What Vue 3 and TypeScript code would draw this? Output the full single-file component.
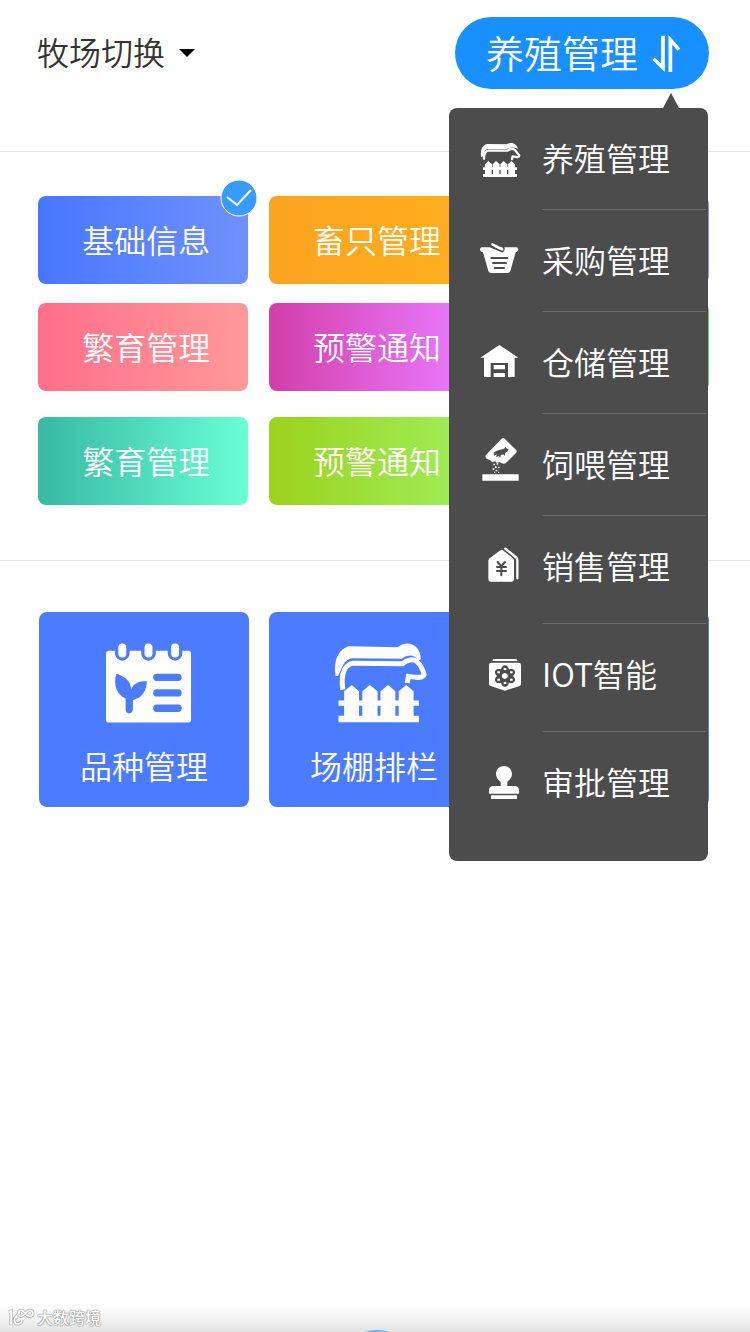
<script setup lang="ts">
import { ref } from 'vue'

type Kind = 'solid' | 'cut' | 'line' | 'cutline' | 'thin'
interface Shape { d: string; kind: Kind }
interface MenuItem { label: string; viewBox: string; shapes: Shape[]; tall?: boolean }
interface Tile { label: string; tone: string }

const current = ref('养殖管理')
const selected = ref(0)

const tiles: Tile[] = [
  { label: '基础信息', tone: 'blue' },
  { label: '畜只管理', tone: 'orange' },
  { label: '', tone: 'violet' },
  { label: '繁育管理', tone: 'pink' },
  { label: '预警通知', tone: 'magenta' },
  { label: '', tone: 'green' },
  { label: '繁育管理', tone: 'teal' },
  { label: '预警通知', tone: 'lime' },
]

const menu: MenuItem[] = [
  {
    label: '养殖管理',
    viewBox: '0 -3 180 180',
    shapes: [
      { kind: 'solid', d: 'M33 80 C31 58 38 44 53 42 L110 43 C120 36 138 38 144 56 C132 51 121 51 112 57 L53 57 C43 60 43 68 37 82 Z' },
      { kind: 'line', d: 'M42 86 C42 71 46 63 55 62 L113 62 C120 56 130 55 136 61 L148 77 C147 83 140 82 128 79 L126 87' },
      { kind: 'solid', d: 'M39 112 H45 V103 L55 93 L66 103 V112 H68 V103 L78 93 L89 103 V112 H91 V103 L101 93 L112 103 V112 H114 V103 L124 93 L135 103 V112 H141 V120 H135 V132 H141 V141 H39 V132 H45 V120 H39 Z M65 120 V132 H69 V120 Z M88 120 V132 H92 V120 Z M111 120 V132 H115 V120 Z' },
    ],
  },
  {
    label: '采购管理',
    viewBox: '0 3 180 180',
    shapes: [
      { kind: 'solid', d: 'M35 52 H140 Q145 53 145 59 Q144 66 137 67 L121 123 Q119 129 112 129 H64 Q57 129 55 123 L39 67 Q31 65 30 59 Q30 53 35 52 Z' },
      { kind: 'cutline', d: 'M62 50 L96 64 Q103 61 100 50' },
      { kind: 'line', d: 'M67 43 L97 58' },
      { kind: 'cutline', d: 'M64 84 H112 M69 99 H108 M74 114 H102' },
    ],
  },
  {
    label: '仓储管理',
    viewBox: '0 309 180 180',
    shapes: [
      { kind: 'solid', d: 'M88 345 L145 383 H134 V441 H114 V399 H62 V441 H42 V383 H31 Z' },
      { kind: 'solid', d: 'M71 405 H105 V418 H71 Z M71 429 H105 V441 H71 Z' },
    ],
  },
  {
    label: '饲喂管理',
    viewBox: '0 15 180 180',
    shapes: [
      { kind: 'solid', d: 'M95 26 Q99 22 104 26 L139 61 Q142 65 138 69 L108 99 Q103 103 96 100 L88 96 L81 99 L75 94 L66 97 L61 91 L50 86 Q44 80 47 76 Z' },
      { kind: 'cut', d: 'M71 68 L78 63 L102 56 L107 51 L109 55 L116 58 L113 64 L108 67 L105 71 L105 77 L99 73 L92 76 L91 84 L86 78 L79 82 L80 73 L72 77 Z' },
      { kind: 'solid', d: 'M37 133 H146 V152 H37 Z M70 101 h5 v5 h-5 Z M80 99 h5 v5 h-5 Z M75 109 h5 v5 h-5 Z M84 110 h5 v5 h-5 Z M68 115 h5 v5 h-5 Z M77 119 h5 v5 h-5 Z M72 125 h4 v4 h-4 Z M84 125 h4 v4 h-4 Z' },
    ],
  },
  {
    label: '销售管理',
    viewBox: '0 321 180 180',
    tall: true,
    shapes: [
      { kind: 'solid', d: 'M91 361 Q95 358 99 361 L129 385 Q132 388 132 392 V448 Q132 455 125 455 H62 Q55 455 55 448 V392 Q55 388 59 385 Z' },
      { kind: 'thin', d: 'M106 356 L137 381 Q142 385 142 390 V445' },
      { kind: 'cutline', d: 'M83 396 L94 409 L105 396 M94 409 V436 M81 411 H108 M81 423 H108' },
    ],
  },
  {
    label: 'IOT智能',
    viewBox: '0 0 180 180',
    tall: true,
    shapes: [
      { kind: 'solid', d: 'M70 42 H139 L143 48 H67 Z M64 53 H146 Q153 53 153 60 V117 Q153 121 149 123 L105 137 L62 123 Q57 121 57 117 V60 Q57 53 64 53 Z' },
      { kind: 'cut', d: 'M105 61 C112 61 115 66 117 73 C125 71 131 71 134 77 C137 83 134 88 129 93 C134 98 137 103 134 109 C131 115 125 115 117 113 C115 120 112 125 105 125 C98 125 95 120 93 113 C85 115 79 115 76 109 C73 103 76 98 81 93 C76 88 73 83 76 77 C79 71 85 71 93 73 C95 66 98 61 105 61 Z' },
      { kind: 'solid', d: 'M105 84 A9 9 0 1 1 104 84 Z M101 69 h8 v6 h-8 Z M101 111 h8 v6 h-8 Z M82 79 h8 v6 h-8 Z M120 79 h8 v6 h-8 Z M82 101 h8 v6 h-8 Z M120 101 h8 v6 h-8 Z' },
    ],
  },
  {
    label: '审批管理',
    viewBox: '0 324 180 180',
    tall: true,
    shapes: [
      { kind: 'solid', d: 'M102 363 C117 363 126 374 126 387 C126 397 120 405 112 410 V423 H136 Q147 424 147 436 V446 H57 V436 Q57 424 68 423 H92 V410 C84 405 78 397 78 387 C78 374 87 363 102 363 Z M63 451 H141 V462 H63 Z' },
    ],
  },
]
</script>

<template>
  <main class="page">
    <header class="top">
      <button class="farm" type="button">
        <span class="farm-name">牧场切换</span>
        <svg class="caret" viewBox="0 0 16 8" aria-hidden="true"><path d="M0 0 H16 L8 8 Z" /></svg>
      </button>
      <div class="switcher">
        <button class="module" type="button" aria-haspopup="menu" aria-expanded="true">
          <span class="module-name">{{ current }}</span>
          <svg class="swap" viewBox="638 100 86 116" aria-hidden="true">
            <path d="M665 105 H676 V213 L639 177 L646 170 L665 188 Z M687 213 V103 L722 143 L714 150 L698 132 V213 Z" />
          </svg>
        </button>
        <nav class="menu" aria-label="模块">
          <button
            v-for="item in menu"
            :key="item.label"
            type="button"
            class="entry"
            :class="{ tall: item.tall }"
            @click="current = item.label"
          >
            <svg class="glyph" :viewBox="item.viewBox" aria-hidden="true">
              <path v-for="(s, i) in item.shapes" :key="i" :class="s.kind" :d="s.d" fill-rule="evenodd" />
            </svg>
            <span class="entry-label">{{ item.label }}</span>
          </button>
        </nav>
      </div>
    </header>

    <section class="categories">
      <button
        v-for="(tile, i) in tiles"
        :key="i"
        type="button"
        class="tile"
        :class="[tile.tone, { low: i > 5 }]"
        @click="selected = i"
      >
        {{ tile.label }}
        <svg v-if="selected === i" class="badge" viewBox="0 0 38 38" aria-hidden="true">
          <circle cx="19" cy="19" r="18" />
          <path d="M7 18 L17 26 L31 11" />
        </svg>
      </button>
    </section>

    <section class="features">
      <button class="feature" type="button">
        <svg class="calendar" viewBox="46 40 256 240" aria-hidden="true">
          <path class="solid" d="M54 63 H294 Q302 63 302 71 V271 Q302 279 294 279 H54 Q46 279 46 271 V71 Q46 63 54 63 Z" />
          <path class="ring" d="M95 54 V71 M174 54 V71 M254 54 V71" />
          <path class="pin" d="M95 53 V71 M174 53 V71 M254 53 V71" />
          <path class="bar" d="M199 143 H263 M199 190 H263 M199 236 H263" />
          <path class="leaf" d="M77 132 C102 139 120 154 122 178 C130 162 144 154 169 155 C168 185 153 207 127 211 V240 Q126 251 116 252 Q105 251 105 240 V207 C80 195 67 168 77 132 Z" />
        </svg>
        <span>品种管理</span>
      </button>
      <button class="feature" type="button">
        <svg class="cow" viewBox="42 38 278 242" aria-hidden="true">
          <path class="solid" d="M45 138 C39 98 48 61 84 48 L232 51 C248 39 265 36 280 44 C294 51 303 68 303 87 L296 91 C284 72 263 72 246 86 L96 84 C68 88 66 113 53 137 Z" />
          <path class="hide" d="M67 179 C61 133 71 104 99 99 L247 101 C262 87 281 86 291 94 C302 104 309 119 313 134 C309 145 294 143 265 139 L262 159" />
          <path class="solid" fill-rule="evenodd" d="M54 212 H71 V184 L94 165 L116 184 V212 H126 V184 L149 165 L172 184 V212 H181 V184 L204 165 L226 184 V212 H236 V184 L259 165 L281 184 V212 H297 V228 H281 V258 H297 V278 H54 V258 H71 V228 H54 Z M116 228 V258 H126 V228 Z M172 228 V258 H181 V228 Z M226 228 V258 H236 V228 Z" />
        </svg>
        <span>场棚排栏</span>
      </button>
      <button class="feature" type="button"></button>
    </section>

    <footer class="dock">
      <svg class="mark" viewBox="0 0 84 60" aria-hidden="true">
        <path class="edge" d="M5 13 L12 9 V50 M39 12 L25 28 M32 26 C18 28 20 49 34 48 Q44 46 45 36 M43 7 C31 7 31 25 43 25 C53 25 56 7 68 7 C81 7 81 25 68 25 C56 25 53 7 43 7" />
        <path class="core" d="M5 13 L12 9 V50 M39 12 L25 28 M32 26 C18 28 20 49 34 48 Q44 46 45 36 M43 7 C31 7 31 25 43 25 C53 25 56 7 68 7 C81 7 81 25 68 25 C56 25 53 7 43 7" />
      </svg>
      <span class="brand">大数跨境</span>
      <i class="orb"></i>
    </footer>
  </main>
</template>

<style>
body {
  margin: 0;
  background: #fff;
}
</style>

<style scoped>
.page {
  display: flex;
  flex-direction: column;
  min-height: 100vh;
  background: #fff;
  font-family: "Noto Sans CJK SC", sans-serif;
  font-weight: 350;
  font-size: 32px;
  color: #333;
}
button {
  margin: 0;
  padding: 0;
  border: 0;
  background: none;
  font: inherit;
  color: inherit;
  cursor: pointer;
}
.top {
  display: flex;
  justify-content: space-between;
  align-items: flex-start;
  padding: 17px 41px 62px 37px;
  border-bottom: 1px solid #e6e6e6;
}
.farm {
  display: flex;
  align-items: center;
  gap: 14px;
  height: 72px;
}
.farm-name,
.module-name {
  padding-bottom: 4px;
}
.caret {
  width: 16px;
  height: 8px;
  fill: #000;
}
.switcher {
  position: relative;
}
.module {
  display: flex;
  align-items: center;
  gap: 14px;
  height: 72px;
  padding: 0 28px 0 31px;
  border-radius: 36px;
  background: #1890ff;
  color: #fff;
  font-size: 38px;
}
.swap {
  width: 29px;
  height: 39px;
  fill: #fff;
}
.menu {
  position: absolute;
  z-index: 2;
  top: 91px;
  right: 1px;
  box-sizing: border-box;
  width: 259px;
  padding-bottom: 21px;
  border-radius: 8px;
  background: #4c4c4c;
}
.menu::before {
  content: "";
  position: absolute;
  right: 29px;
  bottom: 100%;
  border: 8px solid transparent;
  border-top: 0;
  border-bottom: 15px solid #4c4c4c;
}
.entry {
  display: flex;
  align-items: flex-start;
  gap: 12px;
  width: 100%;
  height: 102px;
  padding: 0 2px 0 21px;
  color: #fff;
  text-align: left;
}
.entry.tall {
  height: 108px;
}
.entry-label {
  flex: 1;
  align-self: stretch;
  line-height: 98px;
  border-bottom: 1px solid #6b6b6b;
}
.entry:last-child .entry-label {
  border-bottom: 0;
}
.glyph {
  width: 60px;
  height: 60px;
  margin-top: 21px;
}
.solid {
  fill: #fff;
}
.cut {
  fill: #4c4c4c;
}
.line,
.cutline,
.thin {
  fill: none;
  stroke: #fff;
  stroke-width: 7;
  stroke-linecap: round;
  stroke-linejoin: round;
}
.cutline {
  stroke: #4c4c4c;
  stroke-width: 6;
}
.thin {
  stroke-width: 7;
}
.categories {
  display: grid;
  grid-template-columns: repeat(3, 1fr);
  column-gap: 21px;
  row-gap: 19px;
  padding: 44px 41px 55px 38px;
  border-bottom: 1px solid #e6e6e6;
}
.tile {
  position: relative;
  height: 88px;
  padding: 0 0 3px 7px;
  border-radius: 8px;
  color: #fff;
}
.tile.low {
  margin-top: 7px;
}
.blue { background: linear-gradient(90deg, #4777ff, #7091fc); }
.orange { background: linear-gradient(90deg, #fca31f, #ffb01f); }
.violet { background: linear-gradient(90deg, #7c5cf0, #a585ef); }
.pink { background: linear-gradient(90deg, #ff6f8a, #ff9999); }
.magenta { background: linear-gradient(90deg, #d33eaa, #ea7bff 95%); }
.green { background: linear-gradient(90deg, #3fbf60, #66cf7a); }
.teal { background: linear-gradient(90deg, #37b9a2, #69ffd6); }
.lime { background: linear-gradient(90deg, #9cd21b, #9ff05e); }
.badge {
  position: absolute;
  top: -17px;
  right: -10px;
  width: 38px;
  height: 38px;
}
.badge circle {
  fill: #3a9bff;
  stroke: #fff;
  stroke-width: 1;
}
.badge path {
  fill: none;
  stroke: #fff;
  stroke-width: 2;
}
.features {
  display: grid;
  grid-template-columns: repeat(3, 1fr);
  gap: 20px;
  padding: 51px 41px 51px 39px;
}
.feature {
  display: flex;
  flex-direction: column;
  align-items: center;
  gap: 18px;
  height: 195px;
  padding-top: 31px;
  border-radius: 8px;
  background: #4b7cff;
  color: #fff;
  line-height: 48px;
}
.feature svg {
  margin-left: 8px;
}
.calendar {
  width: 85px;
  height: 80px;
}
.feature .cow {
  width: 93px;
  height: 80px;
  margin-left: 12px;
}
.ring,
.pin,
.bar,
.hide {
  fill: none;
  stroke: #4b7cff;
  stroke-width: 44;
  stroke-linecap: round;
}
.pin {
  stroke: #fff;
  stroke-width: 24;
}
.bar {
  stroke-width: 22;
}
.hide {
  stroke: #fff;
  stroke-width: 15;
  stroke-linecap: butt;
}
.leaf {
  fill: #4b7cff;
}
.dock {
  position: relative;
  display: flex;
  align-items: center;
  gap: 2px;
  height: 28px;
  margin-top: auto;
  padding-left: 7px;
  overflow: hidden;
  background: linear-gradient(#fff, #f4f4f4 50%, #e2e2e2);
}
.mark {
  width: 28px;
  height: 20px;
}
.edge,
.core {
  fill: none;
  stroke: #b5b5b5;
  stroke-width: 10;
}
.core {
  stroke: #fff;
  stroke-width: 5;
}
.brand {
  padding-bottom: 2px;
  font-size: 16px;
  font-weight: 500;
  line-height: 26px;
  color: #fff;
  text-shadow: 0 0 1px #888, 0 0 2px #999, 0 0 1px #999;
}
.orb {
  position: absolute;
  top: 26px;
  left: 50%;
  width: 80px;
  height: 80px;
  margin-left: -38px;
  border-radius: 50%;
  background: #6bb4f8;
}
</style>
